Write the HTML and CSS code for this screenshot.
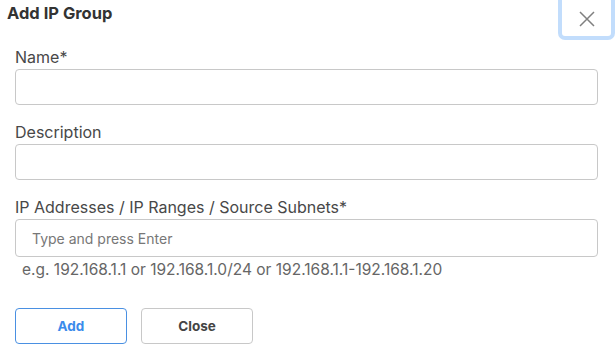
FILE: index.html
```html
<!DOCTYPE html>
<html lang="en">
<head>
    <meta charset="UTF-8">
    <meta name="viewport" content="width=device-width, initial-scale=1.0">
    <title>Add IP Group</title>
    <link rel="stylesheet" href="styles.css">
</head>
<body>
    <article class="dialog">
        <header class="dialog-head">
            <h2 class="dialog-title">Add IP Group</h2>
            <button type="button" class="btn-x" aria-label="Close">
                <svg width="16" height="16" viewBox="0 0 16 16">
                    <path d="M1 1 L15 15 M15 1 L1 15" stroke="#808080" stroke-width="1.5" fill="none"/>
                </svg>
            </button>
        </header>

        <form class="dialog-body">
            <div class="field">
                <label for="name">Name*</label>
                <input type="text" id="name">
            </div>
            <div class="field">
                <label for="desc">Description</label>
                <input type="text" id="desc">
            </div>
            <div class="field">
                <label for="ips">IP Addresses / IP Ranges / Source Subnets*</label>
                <input type="text" id="ips" class="tall" placeholder="Type and press Enter">
                <p class="hint">e.g. 192.168.1.1 or 192.168.1.0/24 or 192.168.1.1-192.168.1.20</p>
            </div>

            <div class="actions">
                <button type="button" class="btn btn-primary">Add</button>
                <button type="button" class="btn">Close</button>
            </div>
        </form>
    </article>
</body>
</html>
```

FILE: styles.css
```css
body {
    margin: 0;
    background: #fff;
    font-family: Inter, "Open Sans", sans-serif;
    color: #333;
}

.dialog {
    width: 615px;
}

.dialog-head {
    display: flex;
    justify-content: space-between;
    align-items: flex-start;
    height: 47px;
}

.dialog-title {
    margin: 3px 0 0 7px;
    font-size: 16.5px;
    line-height: 20px;
    font-weight: 700;
    color: #333;
}

.btn-x {
    display: flex;
    align-items: center;
    justify-content: center;
    box-sizing: border-box;
    width: 57px;
    height: 46px;
    margin: -6px 0 0 0;
    padding: 3px 0 0;
    background: #fff;
    border: 4px solid #c2ddfc;
    border-radius: 7px;
}

.dialog-body {
    padding: 0 17px 0 15px;
}

.field {
    margin-bottom: 17px;
}

.field label {
    display: block;
    margin-bottom: 2px;
    font-size: 16px;
    line-height: 20px;
    color: #484848;
}

.field input {
    display: block;
    box-sizing: border-box;
    width: 100%;
    height: 36px;
    padding: 0 16px;
    border: 1px solid #c8c8c8;
    border-radius: 4px;
    font-family: inherit;
    font-size: 14px;
    color: #333;
}

.field input.tall {
    height: 38px;
}

.field input::placeholder {
    color: #777;
}

.hint {
    margin: 3px 0 0 7px;
    font-size: 15.5px;
    line-height: 20px;
    color: #666;
}

.actions {
    display: flex;
    gap: 14px;
    margin-top: 28px;
}

.btn {
    width: 112px;
    height: 36px;
    background: #fff;
    border: 1px solid #c8c8c8;
    border-radius: 4px;
    font-family: inherit;
    font-size: 13.5px;
    font-weight: 700;
    color: #444;
}

.btn-primary {
    border-color: #4a90e2;
    color: #3b8beb;
}
```
